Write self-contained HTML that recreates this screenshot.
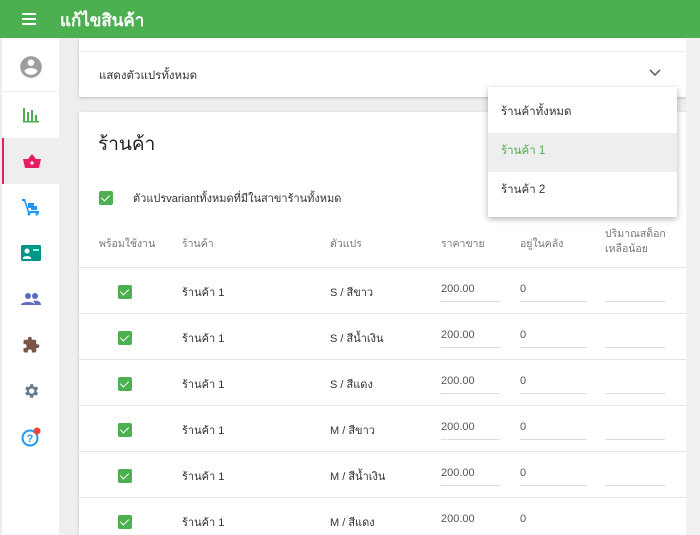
<!DOCTYPE html>
<html style="width:700px;height:535px;overflow:hidden"><head><meta charset="utf-8"><style>
*{margin:0;padding:0;box-sizing:border-box}
body{width:700px;height:535px;overflow:hidden;background:#eeeeee;font-family:"Liberation Sans","Noto Sans CJK SC",sans-serif;position:relative;color:#333}
.top{position:absolute;left:0;top:0;width:700px;height:38px;background:#4caf50;color:#fff}
.top .t{position:absolute;left:60px;top:7px;font-size:17px;font-weight:bold}
.side{position:absolute;left:2px;top:38px;width:57px;height:497px;background:#fff}
.ic{position:absolute;left:0;width:57px;height:46px;display:flex;align-items:center;justify-content:center}
.card{position:absolute;left:79px;width:607px;background:#fff;box-shadow:0 1px 3px rgba(0,0,0,.2)}
.sb{position:absolute;left:686px;top:38px;width:14px;height:497px;background:#f1f1f1}
.row{position:absolute;left:0;width:607px;border-top:1px solid #e6e6e6;height:46px;font-size:11px}
.row span{position:absolute;top:15px}
.cb{position:absolute;width:14px;height:14px;background:#4caf50;border-radius:2px}
.cb:after{content:"";position:absolute;left:4px;top:2px;width:4px;height:7px;border:solid #fff;border-width:0 1.6px 1.6px 0;transform:rotate(45deg)}
.ul{position:absolute;top:33px;height:1px;background:#ddd}
.hd{position:absolute;font-size:10.5px;color:#777}
.dd{position:absolute;left:488px;top:87px;width:189px;height:130px;background:#fff;box-shadow:0 2px 6px rgba(0,0,0,.3);font-size:11.5px}
.dd div{height:39px;line-height:37px;padding-left:13px}
</style></head><body>
<div class="top">
<div style="position:absolute;left:22px;top:13px;width:14px;height:2px;background:#fff;box-shadow:0 5px 0 #fff,0 10px 0 #fff"></div>
<div class="t">แก้ไขสินค้า</div></div>
<div class="side">
<div class="ic" style="top:6px"><svg width="26" height="26" viewBox="0 0 24 24"><path fill="#9e9e9e" d="M12 2a10 10 0 100 20 10 10 0 000-20zm0 3a3 3 0 110 6 3 3 0 010-6zm0 14.2a7.2 7.2 0 01-6-3.2c0-2 4-3.1 6-3.1s6 1.1 6 3.1a7.2 7.2 0 01-6 3.2z"/></svg></div>
<div style="position:absolute;left:0;top:53px;width:57px;height:1px;background:#eee"></div>
<div class="ic" style="top:54px"><svg width="18" height="18" viewBox="0 0 18 18" fill="#4caf50"><rect x="1" y="2" width="2" height="14"/><rect x="5" y="6" width="2" height="10"/><rect x="9" y="4" width="2" height="12"/><rect x="13" y="9" width="2" height="7"/><rect x="1" y="15" width="16" height="1.5"/></svg></div>
<div class="ic" style="top:100px;background:#eee;border-left:2px solid #e91e63"><svg width="20" height="18" viewBox="0 0 20 18"><path fill="#e91e63" d="M6 7l4-5 4 5h5l-2 9H3L1 7z"/><circle cx="10" cy="11" r="1.6" fill="#fff"/></svg></div>
<div class="ic" style="top:146px"><svg width="20" height="20" viewBox="0 0 20 20" fill="#2196f3"><path d="M1 2h3l4 12h10v2H7L3 4H1z"/><rect x="7" y="6" width="6" height="5"/><rect x="10" y="9" width="6" height="4"/><circle cx="8" cy="17" r="1.5"/><circle cx="16" cy="17" r="1.5"/></svg></div>
<div class="ic" style="top:192px"><svg width="20" height="16" viewBox="0 0 20 16"><rect width="20" height="16" rx="1.5" fill="#009688"/><circle cx="6" cy="6" r="2.5" fill="#fff"/><path d="M2 13c0-2.5 8-2.5 8 0v1H2z" fill="#fff"/><rect x="12" y="4" width="6" height="2" fill="#8fd"/></svg></div>
<div class="ic" style="top:238px"><svg width="20" height="14" viewBox="0 0 20 14" fill="#5c6bc0"><circle cx="7" cy="4" r="3"/><circle cx="14" cy="4" r="3"/><path d="M0 13c0-4 14-4 14 0zM12 9c3-1 8 0 8 4h-6c0-2-1-3-2-4z"/></svg></div>
<div class="ic" style="top:284px"><svg width="18" height="18" viewBox="0 0 24 24" fill="#795548"><path d="M20.5 11H19V7a2 2 0 00-2-2h-4V3.5a2.5 2.5 0 00-5 0V5H4a2 2 0 00-2 2v3.8h1.5a2.7 2.7 0 010 5.4H2V20a2 2 0 002 2h3.8v-1.5a2.7 2.7 0 015.4 0V22H17a2 2 0 002-2v-4h1.5a2.5 2.5 0 000-5z"/></svg></div>
<div class="ic" style="top:330px"><svg width="18" height="18" viewBox="0 0 24 24" fill="#607d8b"><path d="M19.4 13a7.5 7.5 0 000-2l2.1-1.6-2-3.5-2.5 1a7 7 0 00-1.7-1L14.9 3h-4l-.4 2.9a7 7 0 00-1.7 1l-2.5-1-2 3.5L6.4 11a7.5 7.5 0 000 2l-2.1 1.6 2 3.5 2.5-1a7 7 0 001.7 1l.4 2.9h4l.4-2.9a7 7 0 001.7-1l2.5 1 2-3.5zM12.9 15.5a3.5 3.5 0 110-7 3.5 3.5 0 010 7z"/></svg></div>
<div class="ic" style="top:376px"><svg width="22" height="22" viewBox="0 0 22 22"><circle cx="10" cy="12" r="7.5" fill="none" stroke="#2196f3" stroke-width="2"/><text x="10" y="16" font-size="11" font-weight="bold" fill="#2196f3" text-anchor="middle" font-family="Liberation Sans">?</text><circle cx="17" cy="5" r="3.5" fill="#f44336"/></svg></div>
</div>
<div class="card" style="top:38px;height:59px"><div style="position:absolute;left:0;top:13px;width:607px;height:1px;background:#eee"></div><div style="position:absolute;left:20px;top:29px;font-size:11.5px">แสดงตัวแปรทั้งหมด</div>
<svg style="position:absolute;left:570px;top:31px" width="12" height="8" viewBox="0 0 12 8"><path d="M1 1l5 5 5-5" stroke="#666" stroke-width="1.6" fill="none"/></svg></div>
<div class="card" style="top:112px;height:423px">
<div style="position:absolute;left:19px;top:17px;font-size:19px;color:#222">ร้านค้า</div>
<div class="cb" style="left:20px;top:79px"></div>
<div style="position:absolute;left:54px;top:77px;font-size:11px">ตัวแปรvariantทั้งหมดที่มีในสาขาร้านทั้งหมด</div>
<div class="hd" style="left:20px;top:123px">พร้อมใช้งาน</div>
<div class="hd" style="left:103px;top:123px">ร้านค้า</div>
<div class="hd" style="left:251px;top:123px">ตัวแปร</div>
<div class="hd" style="left:362px;top:123px">ราคาขาย</div>
<div class="hd" style="left:441px;top:123px">อยู่ในคลัง</div>
<div class="hd" style="left:526px;top:115px;line-height:15px">ปริมาณสต็อก<br>เหลือน้อย</div>
<div class="row" style="top:155px"><div class="cb" style="left:39px;top:17px"></div><span style="left:103px">ร้านค้า 1</span><span style="left:251px">S / สีขาว</span><span style="left:362px;color:#555">200.00</span><span style="left:441px;color:#555">0</span><div class="ul" style="left:362px;width:59px"></div><div class="ul" style="left:441px;width:67px"></div><div class="ul" style="left:526px;width:60px"></div></div>
<div class="row" style="top:201px"><div class="cb" style="left:39px;top:17px"></div><span style="left:103px">ร้านค้า 1</span><span style="left:251px">S / สีน้ำเงิน</span><span style="left:362px;color:#555">200.00</span><span style="left:441px;color:#555">0</span><div class="ul" style="left:362px;width:59px"></div><div class="ul" style="left:441px;width:67px"></div><div class="ul" style="left:526px;width:60px"></div></div>
<div class="row" style="top:247px"><div class="cb" style="left:39px;top:17px"></div><span style="left:103px">ร้านค้า 1</span><span style="left:251px">S / สีแดง</span><span style="left:362px;color:#555">200.00</span><span style="left:441px;color:#555">0</span><div class="ul" style="left:362px;width:59px"></div><div class="ul" style="left:441px;width:67px"></div><div class="ul" style="left:526px;width:60px"></div></div>
<div class="row" style="top:293px"><div class="cb" style="left:39px;top:17px"></div><span style="left:103px">ร้านค้า 1</span><span style="left:251px">M / สีขาว</span><span style="left:362px;color:#555">200.00</span><span style="left:441px;color:#555">0</span><div class="ul" style="left:362px;width:59px"></div><div class="ul" style="left:441px;width:67px"></div><div class="ul" style="left:526px;width:60px"></div></div>
<div class="row" style="top:339px"><div class="cb" style="left:39px;top:17px"></div><span style="left:103px">ร้านค้า 1</span><span style="left:251px">M / สีน้ำเงิน</span><span style="left:362px;color:#555">200.00</span><span style="left:441px;color:#555">0</span><div class="ul" style="left:362px;width:59px"></div><div class="ul" style="left:441px;width:67px"></div><div class="ul" style="left:526px;width:60px"></div></div>
<div class="row" style="top:385px"><div class="cb" style="left:39px;top:17px"></div><span style="left:103px">ร้านค้า 1</span><span style="left:251px">M / สีแดง</span><span style="left:362px;color:#555">200.00</span><span style="left:441px;color:#555">0</span></div>
</div>
<div class="sb"></div>
<div class="dd"><div style="margin-top:7px">ร้านค้าทั้งหมด</div><div style="background:#eee;color:#4caf50">ร้านค้า 1</div><div>ร้านค้า 2</div></div>
</body></html>
